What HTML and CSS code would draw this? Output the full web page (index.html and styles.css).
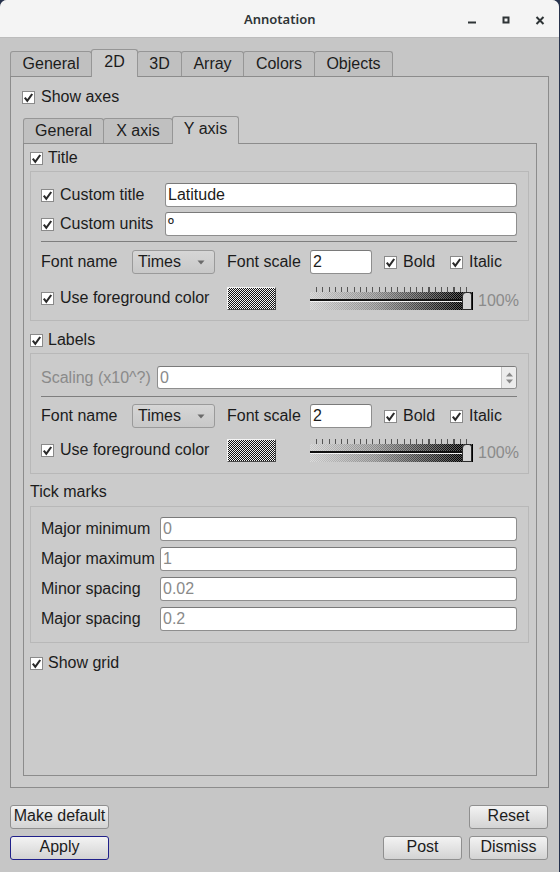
FILE: index.html
```html
<!DOCTYPE html>
<html>
<head>
<meta charset="utf-8">
<title>Annotation</title>
<link rel="stylesheet" href="styles.css">
</head>
<body>
<div class="window">
  <div class="titlebar">
    <span class="title">Annotation</span>
    <div class="wm">
      <span class="wmbtn"><svg width="16" height="16" viewBox="0 0 16 16"><rect x="4" y="10.5" width="8" height="2" fill="#2e3436"/></svg></span>
      <span class="wmbtn"><svg width="16" height="16" viewBox="0 0 16 16"><rect x="5.5" y="6.5" width="5" height="5" fill="none" stroke="#2e3436" stroke-width="2"/></svg></span>
      <span class="wmbtn"><svg width="16" height="16" viewBox="0 0 16 16"><path d="M4.5 6 L11.5 13 M11.5 6 L4.5 13" stroke="#2e3436" stroke-width="2"/></svg></span>
    </div>
  </div>

  <div class="main">
    <div class="tabbar">
      <div class="tab t-general">General</div>
      <div class="tab sel t-2d">2D</div>
      <div class="tab t-3d">3D</div>
      <div class="tab t-array">Array</div>
      <div class="tab t-colors">Colors</div>
      <div class="tab t-objects">Objects</div>
    </div>
    <div class="panel outer-panel">
      <div class="chkrow gap6">
        <svg class="cb" width="13" height="13" viewBox="0 0 13 13"><rect x="0.5" y="0.5" width="12" height="12" fill="#fff" stroke="#8a8a8a"/><path d="M2.8 6.6 L5.3 9.8 L10.2 3" fill="none" stroke="#2a2a2a" stroke-width="2.1"/></svg>
        <span>Show axes</span>
      </div>

      <div class="tabbar inner-tabbar">
        <div class="tab it-general">General</div>
        <div class="tab it-x">X axis</div>
        <div class="tab sel it-y">Y axis</div>
      </div>
      <div class="panel inner-panel">
        <div class="chkrow">
          <svg class="cb" width="13" height="13" viewBox="0 0 13 13"><rect x="0.5" y="0.5" width="12" height="12" fill="#fff" stroke="#8a8a8a"/><path d="M2.8 6.6 L5.3 9.8 L10.2 3" fill="none" stroke="#2a2a2a" stroke-width="2.1"/></svg>
          <span>Title</span>
        </div>
        <div class="group g-title">
          <div class="row">
            <div class="cell cbl w-custom">
              <svg class="cb" width="13" height="13" viewBox="0 0 13 13"><rect x="0.5" y="0.5" width="12" height="12" fill="#fff" stroke="#8a8a8a"/><path d="M2.8 6.6 L5.3 9.8 L10.2 3" fill="none" stroke="#2a2a2a" stroke-width="2.1"/></svg>
              <span>Custom title</span>
            </div>
            <div class="field grow">Latitude</div>
          </div>
          <div class="row mt5">
            <div class="cell cbl w-custom">
              <svg class="cb" width="13" height="13" viewBox="0 0 13 13"><rect x="0.5" y="0.5" width="12" height="12" fill="#fff" stroke="#8a8a8a"/><path d="M2.8 6.6 L5.3 9.8 L10.2 3" fill="none" stroke="#2a2a2a" stroke-width="2.1"/></svg>
              <span>Custom units</span>
            </div>
            <div class="field grow">º</div>
          </div>
          <div class="sep mt5"></div>
          <div class="row mt8">
            <div class="cell w-fontname">Font name</div>
            <div class="combo"><span>Times</span><svg width="8" height="5" viewBox="0 0 8 5"><polygon points="0.5,0.5 7.5,0.5 4,4.5" fill="#6a6a6a"/></svg></div>
            <div class="cell w-fontscale">Font scale</div>
            <div class="field scale">2</div>
            <div class="cell cbl w-bold">
              <svg class="cb" width="13" height="13" viewBox="0 0 13 13"><rect x="0.5" y="0.5" width="12" height="12" fill="#fff" stroke="#8a8a8a"/><path d="M2.8 6.6 L5.3 9.8 L10.2 3" fill="none" stroke="#2a2a2a" stroke-width="2.1"/></svg>
              <span>Bold</span>
            </div>
            <div class="cell cbl">
              <svg class="cb" width="13" height="13" viewBox="0 0 13 13"><rect x="0.5" y="0.5" width="12" height="12" fill="#fff" stroke="#8a8a8a"/><path d="M2.8 6.6 L5.3 9.8 L10.2 3" fill="none" stroke="#2a2a2a" stroke-width="2.1"/></svg>
              <span>Italic</span>
            </div>
          </div>
          <div class="row mt12">
            <div class="cell cbl w-fg">
              <svg class="cb" width="13" height="13" viewBox="0 0 13 13"><rect x="0.5" y="0.5" width="12" height="12" fill="#fff" stroke="#8a8a8a"/><path d="M2.8 6.6 L5.3 9.8 L10.2 3" fill="none" stroke="#2a2a2a" stroke-width="2.1"/></svg>
              <span>Use foreground color</span>
            </div>
            <div class="swatch"></div>
            <div class="slider">
              <div class="ticks"></div>
              <div class="track"><div class="line"></div><div class="thumb"></div></div>
            </div>
            <div class="pct">100%</div>
          </div>
        </div>

        <div class="chkrow mt9">
          <svg class="cb" width="13" height="13" viewBox="0 0 13 13"><rect x="0.5" y="0.5" width="12" height="12" fill="#fff" stroke="#8a8a8a"/><path d="M2.8 6.6 L5.3 9.8 L10.2 3" fill="none" stroke="#2a2a2a" stroke-width="2.1"/></svg>
          <span>Labels</span>
        </div>
        <div class="group g-labels">
          <div class="row h23">
            <div class="cell w-scaling dim">Scaling (x10^?)</div>
            <div class="field grow spin h23">
              <span class="val dim">0</span>
              <span class="spinner"><svg width="9" height="14" viewBox="0 0 9 14"><polygon points="1,5.5 8,5.5 4.5,1.5" fill="#8a8a8a"/><polygon points="1,8.5 8,8.5 4.5,12.5" fill="#8a8a8a"/></svg></span>
            </div>
          </div>
          <div class="sep mt7"></div>
          <div class="row mt7">
            <div class="cell w-fontname">Font name</div>
            <div class="combo"><span>Times</span><svg width="8" height="5" viewBox="0 0 8 5"><polygon points="0.5,0.5 7.5,0.5 4,4.5" fill="#6a6a6a"/></svg></div>
            <div class="cell w-fontscale">Font scale</div>
            <div class="field scale">2</div>
            <div class="cell cbl w-bold">
              <svg class="cb" width="13" height="13" viewBox="0 0 13 13"><rect x="0.5" y="0.5" width="12" height="12" fill="#fff" stroke="#8a8a8a"/><path d="M2.8 6.6 L5.3 9.8 L10.2 3" fill="none" stroke="#2a2a2a" stroke-width="2.1"/></svg>
              <span>Bold</span>
            </div>
            <div class="cell cbl">
              <svg class="cb" width="13" height="13" viewBox="0 0 13 13"><rect x="0.5" y="0.5" width="12" height="12" fill="#fff" stroke="#8a8a8a"/><path d="M2.8 6.6 L5.3 9.8 L10.2 3" fill="none" stroke="#2a2a2a" stroke-width="2.1"/></svg>
              <span>Italic</span>
            </div>
          </div>
          <div class="row mt10">
            <div class="cell cbl w-fg">
              <svg class="cb" width="13" height="13" viewBox="0 0 13 13"><rect x="0.5" y="0.5" width="12" height="12" fill="#fff" stroke="#8a8a8a"/><path d="M2.8 6.6 L5.3 9.8 L10.2 3" fill="none" stroke="#2a2a2a" stroke-width="2.1"/></svg>
              <span>Use foreground color</span>
            </div>
            <div class="swatch"></div>
            <div class="slider">
              <div class="ticks"></div>
              <div class="track"><div class="line"></div><div class="thumb"></div></div>
            </div>
            <div class="pct">100%</div>
          </div>
        </div>

        <div class="plainrow mt8">Tick marks</div>
        <div class="group g-ticks">
          <div class="row">
            <div class="cell w-tick">Major minimum</div>
            <div class="field grow dim">0</div>
          </div>
          <div class="row mt6">
            <div class="cell w-tick">Major maximum</div>
            <div class="field grow dim">1</div>
          </div>
          <div class="row mt6">
            <div class="cell w-tick">Minor spacing</div>
            <div class="field grow dim">0.02</div>
          </div>
          <div class="row mt6">
            <div class="cell w-tick">Major spacing</div>
            <div class="field grow dim">0.2</div>
          </div>
        </div>

        <div class="chkrow mt10">
          <svg class="cb" width="13" height="13" viewBox="0 0 13 13"><rect x="0.5" y="0.5" width="12" height="12" fill="#fff" stroke="#8a8a8a"/><path d="M2.8 6.6 L5.3 9.8 L10.2 3" fill="none" stroke="#2a2a2a" stroke-width="2.1"/></svg>
          <span>Show grid</span>
        </div>
      </div>
    </div>

    <div class="footer">
      <div class="col-left">
        <div class="btn wide">Make default</div>
        <div class="btn wide default">Apply</div>
      </div>
      <div class="col-right">
        <div class="btn">Reset</div>
        <div class="btnrow">
          <div class="btn">Post</div>
          <div class="btn">Dismiss</div>
        </div>
      </div>
    </div>
  </div>
</div>
</body>
</html>
```

FILE: styles.css
```css
html, body {
  margin: 0;
  padding: 0;
}
body {
  background: #26324d;
  font-family: "Liberation Sans", Arial, sans-serif;
  font-size: 16px;
  color: #1c1c1c;
}
.window {
  width: 559px;
  height: 872px;
  background: #c6c6c6;
  border-radius: 7px 7px 0 0;
  overflow: hidden;
}
.titlebar {
  height: 37px;
  background: #f4f4f4;
  border-bottom: 1px solid #bcbcbc;
  display: flex;
  align-items: center;
  padding-right: 2px;
}
.title {
  margin-left: 244px;
  font-family: "Noto Sans", sans-serif;
  font-size: 13px;
  font-weight: 600;
  color: #2e3436;
}
.wm {
  margin-left: auto;
  display: flex;
}
.wmbtn {
  width: 34px;
  height: 37px;
  display: flex;
  align-items: center;
  justify-content: center;
}
.wmbtn svg { display: block; }

.main {
  padding: 11px 10px 0 10px;
}
.tabbar {
  display: flex;
  align-items: flex-end;
  height: 27px;
}
.tab {
  box-sizing: border-box;
  height: 25px;
  border: 1px solid #969696;
  border-bottom: none;
  border-radius: 3px 3px 0 0;
  background: #c0c0c0;
  display: flex;
  align-items: center;
  justify-content: center;
  margin-right: -1px;
  padding-bottom: 1px;
}
.tab.sel {
  height: 28px;
  margin-bottom: -1px;
  background: #cbcbcb;
  position: relative;
  z-index: 1;
  padding-bottom: 4px;
}
.t-general { width: 82px; }
.t-2d { width: 47px; }
.t-3d { width: 45px; }
.t-array { width: 63px; }
.t-colors { width: 72px; }
.t-objects { width: 79px; }
.it-general { width: 81px; }
.it-x { width: 70px; }
.it-y { width: 67px; }

.panel {
  box-sizing: border-box;
  border: 1px solid #8c8c8c;
  background: #cbcbcb;
}
.outer-panel {
  width: 539px;
  height: 712px;
  padding: 10px 11px 0 11px;
}
.inner-tabbar {
  margin-top: 9px;
  margin-left: 1px;
}
.inner-panel {
  width: 514px;
  height: 633px;
  margin-left: 1px;
  padding: 4px 7px 0 6px;
}

.chkrow {
  display: flex;
  align-items: center;
  height: 20px;
  gap: 5px;
}
.chkrow.gap6 { gap: 6px; }
.plainrow {
  height: 20px;
  display: flex;
  align-items: center;
}
.cb { display: block; flex: none; }

.group {
  border: 1px solid #b8b8b8;
  margin-top: 3px;
}
.g-title { padding: 11px 11px 10px 10px; }
.g-labels { padding: 12px 11px 11px 10px; }
.g-ticks { padding: 10px 11px 11px 10px; margin-top: 4px; }

.row {
  display: flex;
  align-items: center;
  height: 24px;
}
.row.h23 { height: 23px; }
.cell {
  display: flex;
  align-items: center;
  flex: none;
  white-space: nowrap;
}
.cbl { gap: 6px; }
.w-custom { width: 124px; }
.w-fontname { width: 91px; }
.w-fontscale { width: 83px; margin-left: 12px; }
.w-bold { width: 66px; margin-left: 12px; }
.w-fg { width: 186px; }
.w-scaling { width: 116px; }
.w-tick { width: 119px; }

.mt5 { margin-top: 5px; }
.mt6 { margin-top: 6px; }
.mt7 { margin-top: 7px; }
.mt8 { margin-top: 8px; }
.mt9 { margin-top: 9px; }
.mt10 { margin-top: 10px; }
.mt12 { margin-top: 12px; }

.dim { color: #8a8a8a; }

.field {
  box-sizing: border-box;
  height: 24px;
  background: #fff;
  border: 1px solid #8e8e8e;
  border-top-color: #7a7a7a;
  border-radius: 3px;
  display: flex;
  align-items: center;
  padding-left: 2px;
  white-space: nowrap;
}
.field.h23 { height: 23px; }
.grow { flex: 1; }
.scale { width: 62px; flex: none; }
.spin { padding-right: 0; }
.spin .val { flex: 1; }
.spinner {
  width: 14px;
  height: 100%;
  display: flex;
  align-items: center;
  justify-content: center;
  background: #ececec;
  border-left: 1px solid #c4c4c4;
  border-radius: 0 2px 2px 0;
}
.spinner svg { display: block; }

.sep {
  height: 0;
  border-top: 1px solid #7e7e7e;
}

.combo {
  box-sizing: border-box;
  width: 83px;
  height: 24px;
  flex: none;
  border: 1px solid #9a9a9a;
  border-radius: 3px;
  background: linear-gradient(#d6d6d6, #c8c8c8);
  display: flex;
  align-items: center;
  padding: 0 9px 0 5px;
}
.combo span { flex: 1; }
.combo svg { display: block; }

.swatch {
  box-sizing: border-box;
  width: 49px;
  height: 23px;
  flex: none;
  border: 1px solid;
  border-color: #f6f6f6 #4a4a4a #4a4a4a #f6f6f6;
  background-color: #808080;
  background-image: repeating-conic-gradient(#111 0 25%, #f2f2f2 0 50%);
  background-size: 2px 2px;
}

.slider {
  width: 163px;
  flex: none;
  margin-left: 34px;
  display: flex;
  flex-direction: column;
}
.ticks {
  height: 5px;
  margin: 0 6px 0 6px;
  background: repeating-linear-gradient(to right, #555 0 1px, transparent 1px 6.25px);
}
.track {
  height: 18px;
  box-sizing: border-box;
  border-right: 1px solid #000;
  display: flex;
  align-items: center;
  background-image:
    repeating-conic-gradient(rgba(255,255,255,0.35) 0 25%, rgba(0,0,0,0) 0 50%),
    linear-gradient(to right, #c9c9c9, #8a8a8a 40%, #000 92%);
  background-size: 2px 2px, 100% 100%;
}
.line {
  flex: 1;
  border-top: 2px solid #111;
  border-bottom: 1px solid #f4f4f4;
  box-sizing: content-box;
  height: 0;
}
.thumb {
  box-sizing: border-box;
  width: 10px;
  height: 18px;
  align-self: stretch;
  background: #d4d4d4;
  border: 1px solid #2a2a2a;
  border-radius: 4px 3px 0 0;
}
.pct {
  margin-left: 5px;
  color: #8a8a8a;
  padding-top: 5px;
}

.footer {
  width: 538px;
  margin-top: 17px;
  display: flex;
  justify-content: space-between;
}
.col-left, .col-right {
  display: flex;
  flex-direction: column;
  gap: 7px;
}
.col-right { align-items: flex-end; }
.btnrow {
  display: flex;
  gap: 7px;
}
.btn {
  box-sizing: border-box;
  width: 79px;
  height: 24px;
  border: 1px solid #8f8f8f;
  border-radius: 3px;
  background: linear-gradient(#f3f3f3, #d3d3d3);
  display: flex;
  align-items: center;
  justify-content: center;
  padding-bottom: 2px;
  white-space: nowrap;
}
.btn.wide { width: 99px; }
.btn.default { border-color: #20208a; }
```
